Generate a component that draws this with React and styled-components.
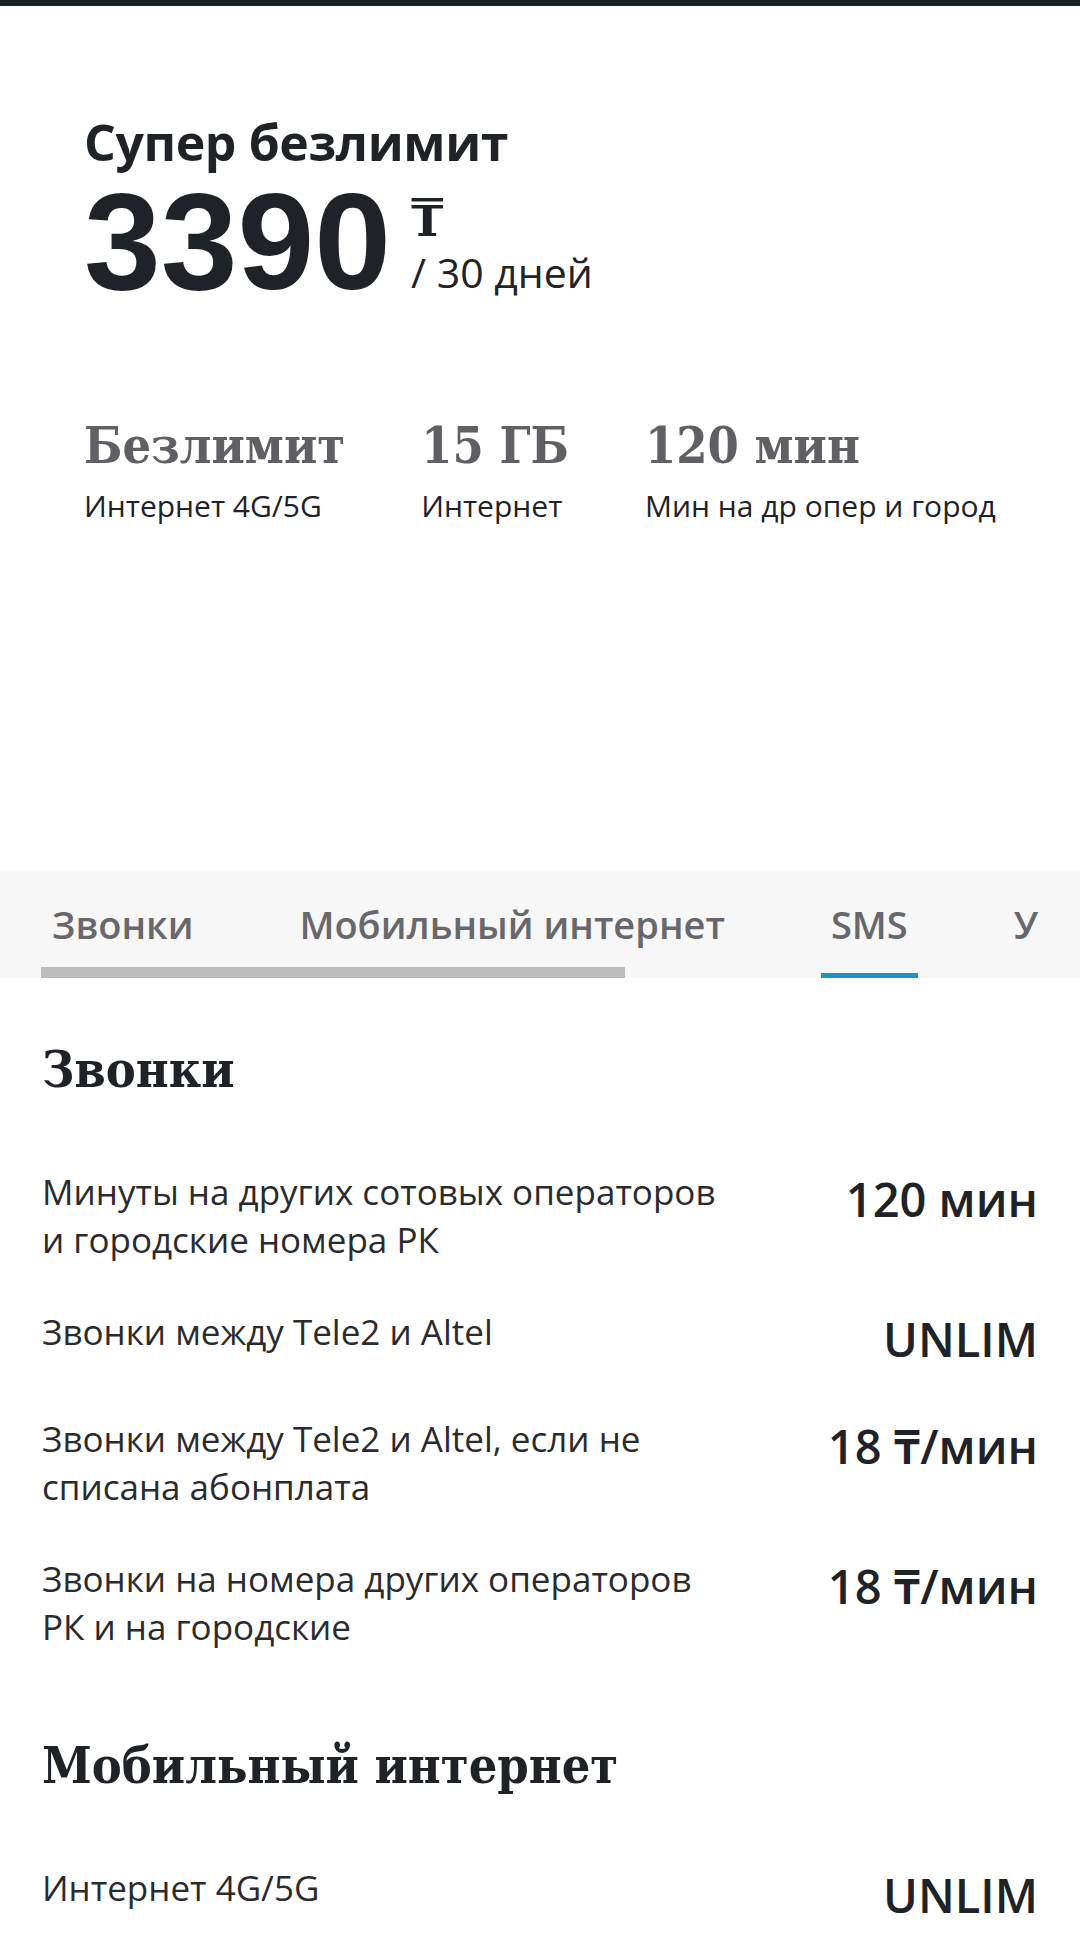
import React from 'react';
import styled, { createGlobalStyle } from 'styled-components';

const GlobalStyle = createGlobalStyle`
  html, body {
    margin: 0;
    padding: 0;
    background: #fff;
  }
  body {
    font-family: "Open Sans", "Noto Sans", sans-serif;
    color: #1f2226;
  }
  * {
    box-sizing: border-box;
  }
`;

const slab = `"DejaVu Serif Condensed", "DejaVu Serif", serif`;

const Page = styled.div`
  width: 1080px;
  height: 1941px;
  overflow: hidden;
  background: #fff;
`;

const TopStrip = styled.div`
  height: 6px;
  background: #1c1f22;
`;

const Hero = styled.section`
  height: 865px;
  padding: 108px 84px 0;
`;

const PlanTitle = styled.h1`
  margin: 0;
  font-size: 50px;
  line-height: 57.6px;
  font-weight: 700;
  letter-spacing: -0.4px;
`;

const PriceRow = styled.div`
  display: flex;
  align-items: flex-end;
  gap: 20px;
`;

const PriceAmount = styled.div`
  font-family: "Liberation Sans", Arial, sans-serif;
  font-weight: 700;
  font-size: 138px;
  line-height: 138px;
`;

const PriceSide = styled.div`
  display: flex;
  flex-direction: column;
  margin-bottom: 17px;
`;

const Tenge = styled.span`
  font-family: ${slab};
  font-weight: 700;
  font-size: 52px;
  line-height: 52px;
  margin-bottom: 8px;
`;

const Period = styled.span`
  font-size: 41px;
  line-height: 41px;
  color: #222326;
`;

const Stats = styled.div`
  display: flex;
  gap: 76px;
  margin-top: 106px;
`;

const Stat = styled.div`
  display: flex;
  flex-direction: column;
  gap: 10px;
`;

const StatValue = styled.span`
  font-family: ${slab};
  font-weight: 700;
  font-size: 50px;
  line-height: 60px;
  color: #5f5f64;
  white-space: nowrap;
`;

const StatLabel = styled.span`
  font-size: 30px;
  line-height: 40px;
  color: #1f2226;
  white-space: nowrap;
`;

const TabBar = styled.nav`
  position: relative;
  height: 107px;
  padding: 0 41px;
  background: #f7f7f7;
`;

const TabTrack = styled.div`
  display: flex;
  gap: 86px;
  height: 100%;
  padding-left: 1px;
  overflow: hidden;
  white-space: nowrap;
`;

const Tab = styled.div`
  flex-shrink: 0;
  padding: 27px 10px 0;
  font-size: 38px;
  line-height: 52px;
  font-weight: 600;
  color: #68686c;
  border-bottom: 5px solid ${p => (p.$active ? '#1c93c9' : 'transparent')};
`;

const ScrollThumb = styled.div`
  position: absolute;
  left: 41px;
  bottom: 0;
  width: 584px;
  height: 11px;
  background: #bcbcbc;
`;

const Section = styled.section`
  padding: 62px 42px 23px 42px;
`;

const SectionTitle = styled.h2`
  margin: 0 0 68px;
  font-family: ${slab};
  font-weight: 700;
  font-size: 50px;
  line-height: 60px;
  color: #1f2226;
`;

const Rows = styled.div`
  display: flex;
  flex-direction: column;
  gap: 44px;
`;

const Row = styled.div`
  display: flex;
  justify-content: space-between;
  align-items: flex-start;
`;

const RowLabel = styled.div`
  width: 700px;
  font-size: 35px;
  line-height: 48px;
  color: #2b2b2e;
`;

const RowValue = styled.div`
  font-size: 47px;
  line-height: 63px;
  font-weight: 600;
  color: #1f2226;
  white-space: nowrap;
  text-align: right;
`;

const stats = [
  { value: 'Безлимит', label: 'Интернет 4G/5G' },
  { value: '15 ГБ', label: 'Интернет' },
  { value: '120 мин', label: 'Мин на др опер и город' },
];

const tabs = ['Звонки', 'Мобильный интернет', 'SMS', 'Услуги'];

const sections = [
  {
    title: 'Звонки',
    rows: [
      { label: 'Минуты на других сотовых операторов и городские номера РК', value: '120 мин' },
      { label: 'Звонки между Tele2 и Altel', value: 'UNLIM' },
      { label: 'Звонки между Tele2 и Altel, если не списана абонплата', value: '18 ₸/мин' },
      { label: 'Звонки на номера других операторов РК и на городские', value: '18 ₸/мин' },
    ],
  },
  {
    title: 'Мобильный интернет',
    rows: [
      { label: 'Интернет 4G/5G', value: 'UNLIM' },
    ],
  },
];

export default function App() {
  return (
    <Page>
      <GlobalStyle />
      <TopStrip />
      <Hero>
        <PlanTitle>Супер безлимит</PlanTitle>
        <PriceRow>
          <PriceAmount>3390</PriceAmount>
          <PriceSide>
            <Tenge>₸</Tenge>
            <Period>/ 30 дней</Period>
          </PriceSide>
        </PriceRow>
        <Stats>
          {stats.map(s => (
            <Stat key={s.label}>
              <StatValue>{s.value}</StatValue>
              <StatLabel>{s.label}</StatLabel>
            </Stat>
          ))}
        </Stats>
      </Hero>
      <TabBar>
        <TabTrack>
          {tabs.map(t => (
            <Tab key={t} $active={t === 'SMS'}>{t}</Tab>
          ))}
        </TabTrack>
        <ScrollThumb />
      </TabBar>
      {sections.map(section => (
        <Section key={section.title}>
          <SectionTitle>{section.title}</SectionTitle>
          <Rows>
            {section.rows.map(row => (
              <Row key={row.label}>
                <RowLabel>{row.label}</RowLabel>
                <RowValue>{row.value}</RowValue>
              </Row>
            ))}
          </Rows>
        </Section>
      ))}
    </Page>
  );
}
